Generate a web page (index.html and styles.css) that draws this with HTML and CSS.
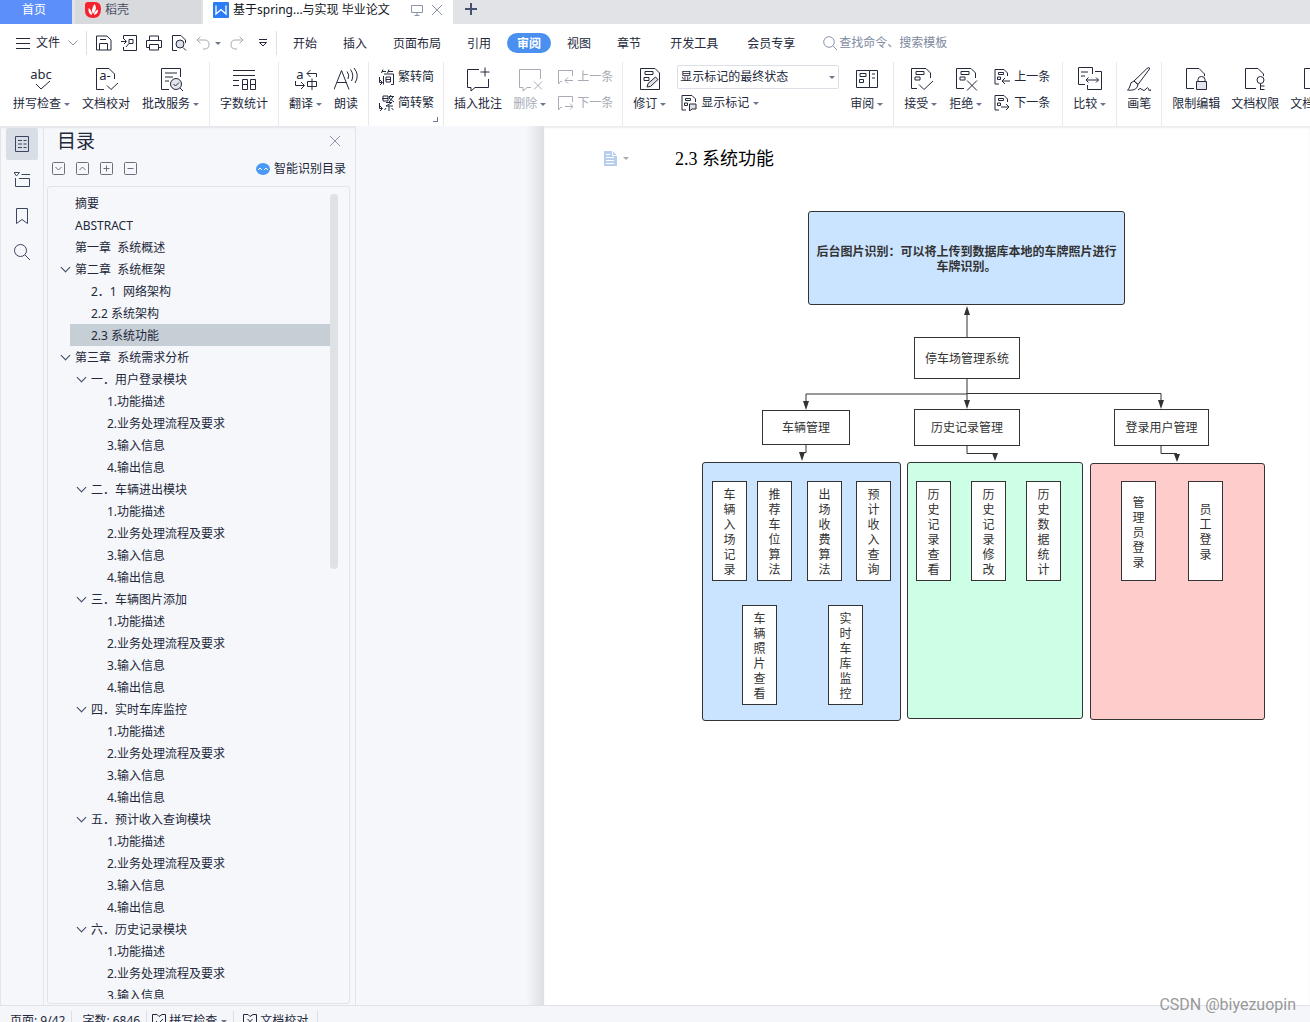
FILE: index.html
```html
<!DOCTYPE html>
<html lang="zh-CN">
<head>
<meta charset="utf-8">
<title>基于spring...与实现 毕业论文</title>
<link rel="stylesheet" href="styles.css">
</head>
<body>
<svg class="sprite" aria-hidden="true">
  <symbol id="i-comment" viewBox="0 0 16 16"><path d="M5 12.500H3.500L1.500 15V1.500H15.500V7"/></symbol>
</svg>

<header class="tabs">
  <button class="tab tab-home">首页</button>
  <button class="tab tab-docer">
    <svg class="logo" viewBox="0 0 16 16"><path d="M3 0h7q6 0 6 7 0 9-8 9Q0 16 0 9V3Q0 0 3 0z" fill="#f5222d"/><path d="M9.500 2Q13 6 8 12Q5.500 8 9.500 2zM3.500 6Q7 8 7 13Q3 12 3.500 6zM13 7.500Q13 12 9 13Q9 9 13 7.500z" fill="#fff"/></svg>
    稻壳</button>
  <div class="tab tab-doc">
    <svg class="logo" viewBox="0 0 16 16"><rect width="16" height="16" rx="1" fill="#2b7cf5"/><path d="M3 3.500V12L8 7.500L13 12V3.500" fill="none" stroke="#fff" stroke-width="1.300"/></svg>
    <span class="tab-title">基于spring...与实现 毕业论文</span>
    <svg class="ico-12 faint" viewBox="0 0 12 12"><path d="M.5 1.500h11v7H.5zM6 8.500v3M3.500 11.500h5"/></svg>
    <button class="icon-btn" aria-label="关闭"><svg class="ico-12 faint" viewBox="0 0 12 12"><path d="M1 1l10 10M11 1L1 11"/></svg></button>
  </div>
  <button class="icon-btn tab-add" aria-label="新建"><svg class="ico-12 thick" viewBox="0 0 12 12"><path d="M6 0v12M0 6h12"/></svg></button>
</header>

<nav class="menubar">
  <button class="file-btn">
    <svg class="ico-14" viewBox="0 0 14 14"><path d="M0 2.500h14M0 7.500h14M0 12.500h14"/></svg>
    文件
    <svg class="chev faint" viewBox="0 0 10 6"><path d="M.5.5L5 5L9.500.5"/></svg>
  </button>
  <div class="quick">
    <button class="icon-btn" aria-label="保存"><svg class="ico-16" viewBox="0 0 16 16"><path d="M.5 1H11L15 5V15H.5zM3.500 15V8.500h8V15M4 4.500h6"/></svg></button>
    <button class="icon-btn" aria-label="输出为PDF"><svg class="ico-16" viewBox="0 0 16 16"><path d="M2.500 4V.5h13v15h-13V12M0 6.500h5M3 4l2.500 2.500L3 9M8 4.500h4v4H8zM8 8.500L5 12"/></svg></button>
    <button class="icon-btn" aria-label="打印"><svg class="ico-16" viewBox="0 0 16 16"><path d="M3.500 5V1h9v4M3 12.500H.5V5.500h15v7H13M3.500 9.500h9V15h-9z"/></svg></button>
    <button class="icon-btn" aria-label="打印预览"><svg class="ico-16" viewBox="0 0 16 16"><path d="M6 15.500H1.500V.5H10L14.500 5V8M12 12.500L15 15.500"/><circle cx="9" cy="9" r="4" fill="#dfe1e6"/></svg></button>
    <button class="icon-btn undo" aria-label="撤销"><svg class="ico-14 gray" viewBox="0 0 14 14"><path d="M4.500.5L1 4L4.500 7.500M1 4H8.500Q13 4 13 8.500T8.500 13H7"/></svg><i class="caret"></i></button>
    <button class="icon-btn" aria-label="恢复"><svg class="ico-14 gray" viewBox="0 0 14 14"><path d="M9.500.5L13 4L9.500 7.500M13 4H5.500Q1 4 1 8.500T5.500 13H7"/></svg></button>
    <button class="icon-btn more" aria-label="更多"><svg class="ico-8" viewBox="0 0 8 8"><path d="M0 .5h8M.5 3.500L4 7L7.500 3.500z"/></svg></button>
  </div>
  <div class="menus">
    <button class="menu">开始</button><button class="menu">插入</button><button class="menu">页面布局</button><button class="menu">引用</button><button class="menu active">审阅</button><button class="menu">视图</button><button class="menu">章节</button>
  </div>
  <div class="menus menus-extra">
    <button class="menu">开发工具</button><button class="menu">会员专享</button>
  </div>
  <label class="search">
    <svg class="ico-14 faint" viewBox="0 0 14 14"><circle cx="6" cy="6" r="5.300"/><path d="M10 10l4 4"/></svg>
    <input type="text" placeholder="查找命令、搜索模板" aria-label="查找命令、搜索模板">
  </label>
</nav>

<section class="ribbon">
  <div class="group group-first">
    <button class="big"><svg class="ico-26" viewBox="0 0 26 26"><text x="12" y="13" class="icon-text">abc</text><path d="M7 18l5 5L21 15"/></svg><span>拼写检查<i class="caret"></i></span></button>
    <button class="big"><svg class="ico-26" viewBox="0 0 26 26"><text x="12" y="14" class="icon-text">a-</text><path d="M11 23.500H3.500V2.500H16L21.500 8V13M14 19.500l4 4L25 17"/></svg><span>文档校对</span></button>
    <button class="big"><svg class="ico-26" viewBox="0 0 26 26"><path d="M11 23.500H3.500V2.500H22.500V11M7 7h12M7 11h8M7 15h4M21.500 21.500L25 25"/><circle cx="18" cy="18" r="5.500" fill="#e3e5ea"/><path d="M15.500 18l2 2 3.500-3.500"/></svg><span>批改服务<i class="caret"></i></span></button>
  </div>
  <div class="group">
    <button class="big"><svg class="ico-26" viewBox="0 0 26 26"><path d="M2 4.500H24M2 9.500H24M2 14.500h6M2 19.500h6M11.500 13.500h5v10h-5zM11.500 18.500h5M19.500 13.500h5v10h-5zM19.500 18.500h5"/></svg><span>字数统计</span></button>
  </div>
  <div class="group group-wide">
    <button class="big"><svg class="ico-26" viewBox="0 0 26 26"><text x="7" y="13" class="icon-text">a</text><path d="M23.500 11V7.500H14M17.500 4L14 7.500L17.500 11M2.500 15V19.500H11M8 16l3.500 3.500L8 23M14.500 15.500h9v5h-9zM19 12.500v11.500"/></svg><span>翻译<i class="caret"></i></span></button>
    <button class="big"><svg class="ico-24" viewBox="1 1 24 24"><path d="M1 23.500L8.500 4.500L16 23.500M4 16.500h9.500M14 5.500Q17 9 15 13M17.500 3.500Q21.500 9 18.500 15M21 2Q27 9 22 17"/></svg><span>朗读</span></button>
  </div>
  <div class="group group-narrow">
    <div class="stack">
      <button class="small"><svg class="ico-16" viewBox="0 0 16 16"><path d="M5 .5L3.500 4M4 2.500h4M11 .5L9.500 4M10 2.500h5M5.500 7v8.500M6 5h9.500V15.500H13M8 8h4.500v5H8zM8 10.500h4.500M1.500 8v5.500H4M2 11l2.500 2.500L2 16"/></svg>繁转简</button>
      <button class="small"><svg class="ico-16" viewBox="0 0 16 16"><path d="M5 1h5M4 3.500h6M5 1v5h5V1M11 1.500h5M13 0l-2 3M15 2l-4 5M11 3l5 4M8 7.500h6L8 11h7M11 11v5M8 13l-1.500 2M13.500 13l2 2M1.500 8v5.500H4M2 11l2.500 2.500L2 16"/></svg>简转繁</button>
    </div>
    <i class="launcher"></i>
  </div>
  <div class="group group-narrow-end">
    <button class="big"><svg class="ico-26" viewBox="0 0 26 26"><path d="M14 3.500H2.500V21.500H6V25L10 21.500H23.500V13M20 1.500v9M15.500 6h9"/></svg><span>插入批注</span></button>
    <button class="big disabled"><svg class="ico-26" viewBox="0 0 26 26"><path d="M14 21.500H10L6 25V21.500H2.500V3.500H23.500V13M17 15.500l8 8M25 15.500l-8 8"/></svg><span>删除<i class="caret"></i></span></button>
    <div class="stack">
      <button class="small disabled"><svg class="ico-16" viewBox="0 0 16 16"><use href="#i-comment"/><path d="M8 11.500h8M11 8.500L8 11.500l3 3"/></svg>上一条</button>
      <button class="small disabled"><svg class="ico-16" viewBox="0 0 16 16"><use href="#i-comment"/><path d="M8 11.500h8M13 8.500l3 3-3 3"/></svg>下一条</button>
    </div>
  </div>
  <div class="group">
    <button class="big"><svg class="ico-26" viewBox="0 0 26 26"><path d="M3.500 2.500H18L22.500 7V23.500H3.500zM8 5.500h8v3H8zM7 11.500h5v3H7z"/><path d="M10 21l1-3.500L18.500 11L21 13.500L13.500 20.500z" fill="#dfe1e6"/></svg><span>修订<i class="caret"></i></span></button>
    <div class="stack">
      <span class="select-wrap"><select aria-label="显示状态"><option>显示标记的最终状态</option></select><i class="caret"></i></span>
      <button class="small show-marks"><svg class="ico-16" viewBox="0 0 16 16"><path d="M5 15H1V.5H11L14.500 4V7M4.500 3.500h5v2h-5zM3.500 8h3v2.500h-3z"/><path d="M8.500 9h6.500v5h-4l-2.500 2z" fill="#dfe1e6"/></svg>显示标记<i class="caret"></i></button>
    </div>
    <button class="big"><svg class="ico-26" viewBox="0 0 26 26"><path d="M2.500 4.500H15.500V21.500H2.500zM15.500 4.500H23.500V21.500H15.500M6 7.500h6v3H6zM5.500 13.500h4v3h-4zM18 8h3M18 12h3"/></svg><span>审阅<i class="caret"></i></span></button>
  </div>
  <div class="group group-wide group-changes">
    <button class="big"><svg class="ico-26" viewBox="0 0 26 26"><path d="M9 22.500H3.500V2.500H18L22.500 7V12M8 5.500h8v3H8zM7 11h5v3H7zM11 18.500l5 5L25 15"/></svg><span>接受<i class="caret"></i></span></button>
    <button class="big"><svg class="ico-26" viewBox="0 0 26 26"><path d="M11 22.500H3.500V2.500H18L22.500 7V12M8 5.500h8v3H8zM7 11h5v3H7zM14 14.500l10 10M24 14.500l-10 10"/></svg><span>拒绝<i class="caret"></i></span></button>
    <div class="stack">
      <button class="small"><svg class="ico-16" viewBox="0 0 16 16"><path d="M5 15H1V.5H10L13.500 4V7M4.500 3.500h5v2h-5zM3.500 8h3v2.500h-3zM8 12h8M11 9l-3 3 3 3"/></svg>上一条</button>
      <button class="small"><svg class="ico-16" viewBox="0 0 16 16"><path d="M5 15H1V.5H10L13.500 4V7M4.500 3.500h5v2h-5zM3.500 8h3v2.500h-3zM7 12h8M12 9l3 3-3 3"/></svg>下一条</button>
    </div>
  </div>
  <div class="group">
    <button class="big"><svg class="ico-26" viewBox="0 0 26 26"><path d="M8 18.500H1.500V1.500H15.500V8M4 6h7M4 10h4M18 5.500H24.500V23.500H10.500V19M9 14h12.500M11.500 11.500L9 14l2.500 2.500M19 11.500l2.500 2.500-2.500 2.500"/></svg><span>比较<i class="caret"></i></span></button>
  </div>
  <div class="group">
    <button class="big"><svg class="ico-24" viewBox="1 1 24 24"><path d="M8 15L21 2.500Q24 .5 23.500 3L12 18.500zM8 15l4 3.500M8 15Q4 16 4 20Q3 23.500 1.500 24Q8 25 11 21.500L12 18.500M12 24q2-3 4-.5t4-.5 3 1 2-1"/></svg><span>画笔</span></button>
  </div>
  <div class="group group-last">
    <button class="big"><svg class="ico-26" viewBox="0 0 26 26"><path d="M11 22.500H3.500V2.500H16L21.500 8V10M15 16V13.500q0-3 3.500-3t3.500 3V16"/><path d="M13.500 15.500h10v8h-10z" fill="#e3e5ea"/></svg><span>限制编辑</span></button>
    <button class="big"><svg class="ico-26" viewBox="0 0 26 26"><path d="M14 22.500H3.500V2.500H16L21.500 8V10M18.500 17.500V24M18.500 20h4M18.500 23.500h4"/><circle cx="18.500" cy="14" r="3.500"/></svg><span>文档权限</span></button>
    <button class="big"><svg class="ico-26" viewBox="0 0 26 26"><path d="M14 22.500H3.500V2.500H16L21.500 8V10M13 18l4 4 7-7"/></svg><span>文档认证</span></button>
  </div>
</section>

<main class="workspace">
  <nav class="rail">
    <button class="rail-btn active" aria-label="目录"><svg class="ico-16" viewBox="0 0 16 16"><path d="M1.500.5h13v15h-13zM4 4.500h4M4 8h4M4 11.500h4M9.500 4.500h3M9.500 8h3M9.500 11.500h3"/></svg></button>
    <button class="rail-btn" aria-label="章节"><svg class="ico-16" viewBox="0 0 16 16"><path d="M0 .5h5.500L2.500 4zM7.500 2.500h8.500M1.500 6V14.500h14V6.500H5"/></svg></button>
    <button class="rail-btn" aria-label="书签"><svg class="ico-16" viewBox="0 0 16 16"><path d="M2.500.5h11v15L8 11.500L2.500 15.500z"/></svg></button>
    <button class="rail-btn" aria-label="查找"><svg class="ico-16" viewBox="0 0 16 16"><circle cx="6.500" cy="6.500" r="6"/><path d="M11 11l5 5"/></svg></button>
  </nav>

  <aside class="outline">
    <div class="outline-head">
      <h2>目录</h2>
      <button class="icon-btn" aria-label="关闭目录"><svg class="ico-10 faint" viewBox="0 0 10 10"><path d="M0 0l10 10M10 0L0 10"/></svg></button>
    </div>
    <div class="outline-tools">
      <button class="icon-btn" aria-label="展开"><svg class="ico-13" viewBox="0 0 13 13"><rect x=".5" y=".5" width="12" height="12" rx="1"/><path d="M3.500 5L6.500 8L9.500 5"/></svg></button>
      <button class="icon-btn" aria-label="收起"><svg class="ico-13" viewBox="0 0 13 13"><rect x=".5" y=".5" width="12" height="12" rx="1"/><path d="M3.500 8L6.500 5L9.500 8"/></svg></button>
      <button class="icon-btn" aria-label="增加级别"><svg class="ico-13" viewBox="0 0 13 13"><rect x=".5" y=".5" width="12" height="12" rx="1"/><path d="M3.500 6.500h6M6.500 3.500v6"/></svg></button>
      <button class="icon-btn" aria-label="减少级别"><svg class="ico-13" viewBox="0 0 13 13"><rect x=".5" y=".5" width="12" height="12" rx="1"/><path d="M3.500 6.500h6"/></svg></button>
      <button class="smart"><svg class="bot" viewBox="0 0 14 12"><ellipse cx="7" cy="6" rx="7" ry="6" fill="#4a9af5"/><path d="M2 7l2-2 2 2M8 7l2-2 2 2" fill="none" stroke="#fff"/></svg>智能识别目录</button>
    </div>
    <div class="outline-box">
      <ul class="tree">
        <li><a href="#">摘要</a></li>
        <li><a href="#">ABSTRACT</a></li>
        <li><a href="#">第一章  系统概述</a></li>
        <li class="open"><a href="#">第二章  系统框架</a></li>
        <li class="l2"><a href="#">2．1  网络架构</a></li>
        <li class="l2"><a href="#">2.2 系统架构</a></li>
        <li class="l2 selected"><a href="#">2.3 系统功能</a></li>
        <li class="open"><a href="#">第三章  系统需求分析</a></li>
        <li class="l2 open"><a href="#">一．用户登录模块</a></li>
        <li class="l3"><a href="#">1.功能描述</a></li>
        <li class="l3"><a href="#">2.业务处理流程及要求</a></li>
        <li class="l3"><a href="#">3.输入信息</a></li>
        <li class="l3"><a href="#">4.输出信息</a></li>
        <li class="l2 open"><a href="#">二．车辆进出模块</a></li>
        <li class="l3"><a href="#">1.功能描述</a></li>
        <li class="l3"><a href="#">2.业务处理流程及要求</a></li>
        <li class="l3"><a href="#">3.输入信息</a></li>
        <li class="l3"><a href="#">4.输出信息</a></li>
        <li class="l2 open"><a href="#">三．车辆图片添加</a></li>
        <li class="l3"><a href="#">1.功能描述</a></li>
        <li class="l3"><a href="#">2.业务处理流程及要求</a></li>
        <li class="l3"><a href="#">3.输入信息</a></li>
        <li class="l3"><a href="#">4.输出信息</a></li>
        <li class="l2 open"><a href="#">四．实时车库监控</a></li>
        <li class="l3"><a href="#">1.功能描述</a></li>
        <li class="l3"><a href="#">2.业务处理流程及要求</a></li>
        <li class="l3"><a href="#">3.输入信息</a></li>
        <li class="l3"><a href="#">4.输出信息</a></li>
        <li class="l2 open"><a href="#">五．预计收入查询模块</a></li>
        <li class="l3"><a href="#">1.功能描述</a></li>
        <li class="l3"><a href="#">2.业务处理流程及要求</a></li>
        <li class="l3"><a href="#">3.输入信息</a></li>
        <li class="l3"><a href="#">4.输出信息</a></li>
        <li class="l2 open"><a href="#">六．历史记录模块</a></li>
        <li class="l3"><a href="#">1.功能描述</a></li>
        <li class="l3"><a href="#">2.业务处理流程及要求</a></li>
        <li class="l3"><a href="#">3.输入信息</a></li>
      </ul>
      <div class="scroll-track"><div class="scroll-thumb"></div></div>
    </div>
  </aside>

  <div class="gutter"></div>

  <article class="page">
    <div class="page-line">
      <button class="icon-btn para" aria-label="段落布局"><svg class="para-ico" viewBox="0 0 13 15"><path d="M0 0H8.500L13 4.500V15H0z" fill="#b9cdec"/><path d="M8.500 0V4.500H13M2 3.500h4M2 6.500h8M2 9.500h8M2 12.500h8" fill="none" stroke="#fff"/></svg><i class="caret"></i></button>
      <h1>2.3 系统功能</h1>
    </div>
    <div class="diagram">
      <div class="box panel blue"></div>
      <div class="box panel green"></div>
      <div class="box panel red"></div>
      <svg class="wires" viewBox="0 0 568 514">
        <path d="M267 127V104M267 168V190M267 184H106V192M267 183.500H461V192M106 235V242.500H102M267 236V243.500H295M461 236V243.500H477"/>
        <path class="head" d="M267 96l-3 9h6zM267 199l-3-9h6zM106 200l-3-9h6zM461 199l-3-9h6zM102 251l-3-9h6zM295 251l-3-8h6zM477 252l-3-8h6z"/>
      </svg>
      <div class="box notice">后台图片识别：可以将上传到数据库本地的车牌照片进行<br>车牌识别。</div>
      <div class="box n-root">停车场管理系统</div>
      <div class="box n-car">车辆管理</div>
      <div class="box n-history">历史记录管理</div>
      <div class="box n-login">登录用户管理</div>
      <div class="box tall t-entry"><span>车辆入场记录</span></div>
      <div class="box tall t-recommend"><span>推荐车位算法</span></div>
      <div class="box tall t-charge"><span>出场收费算法</span></div>
      <div class="box tall t-income"><span>预计收入查询</span></div>
      <div class="box tall t-photo"><span>车辆照片查看</span></div>
      <div class="box tall t-monitor"><span>实时车库监控</span></div>
      <div class="box tall t-view"><span>历史记录查看</span></div>
      <div class="box tall t-edit"><span>历史记录修改</span></div>
      <div class="box tall t-stats"><span>历史数据统计</span></div>
      <div class="box tall t-admin"><span>管理员登录</span></div>
      <div class="box tall t-staff"><span>员工登录</span></div>
    </div>
  </article>
</main>

<footer class="status">
  <span class="status-item">页面: 9/42</span>
  <span class="status-item">字数: 6846</span>
  <button class="status-item status-check"><svg class="ico-16" viewBox="0 0 16 16"><path d="M6 1.500H1.500V14.500h13V1.500H11M6 1.500l2 2 3-2M5 8l2.500 2.500L12 6"/></svg>拼写检查<i class="caret"></i></button>
  <button class="status-item"><svg class="ico-16" viewBox="0 0 16 16"><path d="M6 1.500H1.500V14.500h13V1.500H11M6 1.500l2 2 3-2M5.500 6l5 5M10.500 6l-5 5"/></svg>文档校对</button>
</footer>
<div class="watermark">CSDN @biyezuopin</div>
</body>
</html>
```
FILE: styles.css
```css
*, *::before { box-sizing: border-box; }

body {
  margin: 0;
  height: 100vh;
  display: flex;
  flex-direction: column;
  overflow: hidden;
  position: relative;
  background: #f5f7fa;
  color: #23283a;
  font: 12px/20px "Noto Sans", "Noto Sans CJK SC", sans-serif;
}

button, input, select { font: inherit; color: inherit; }
button { border: 0; padding: 0; background: none; white-space: nowrap; }
a { color: inherit; text-decoration: none; }
i { font-style: normal; }
svg { flex: none; fill: none; stroke: currentColor; stroke-width: 1; }
.logo, .bot, .para-ico { stroke: none; }
.sprite { position: absolute; width: 0; height: 0; }

.ico-8 { width: 8px; height: 8px; }
.ico-10 { width: 10px; height: 10px; }
.ico-12 { width: 12px; height: 12px; }
.ico-13 { width: 13px; height: 13px; color: #6b7080; }
.ico-14 { width: 14px; height: 14px; }
.ico-16 { width: 16px; height: 16px; }
.ico-24 { width: 24px; height: 24px; margin: 1px 0; }
.ico-26 { width: 26px; height: 26px; overflow: visible; }
.chev { width: 10px; height: 6px; }
.faint { color: #8a94aa; }
.gray { color: #a3a8b2; }
.thick { stroke-width: 2; color: #45506b; }
.icon-text { font: 13px/14px "Noto Sans", sans-serif; fill: currentColor; stroke: none; text-anchor: middle; }

.icon-btn { display: flex; align-items: center; }
.caret {
  display: inline-block;
  flex: none;
  margin-left: 3px;
  vertical-align: middle;
  border: solid transparent;
  border-width: 3px 3px 0;
  border-top-color: #6b7690;
}

/* Window tabs */
.tabs { flex: none; display: flex; height: 24px; background: #e2e3e7; }
.tab { display: flex; align-items: center; height: 24px; padding-bottom: 4px; }
.tab-home { width: 72px; justify-content: center; padding-right: 4px; background: #5c8ffa; color: #fff; margin-right: 3px; }
.tab-docer { width: 126px; padding-left: 10px; gap: 4px; background: #d9dade; color: #4a5060; margin-right: 2px; }
.tab-doc { width: 250px; padding-left: 10px; background: #fff; color: #101522; }
.tab-title { width: 182px; padding-left: 4px; white-space: nowrap; }
.tab-doc .icon-btn { margin-left: 8px; }
.tab-add { margin-left: 12px; height: 18px; }
.logo { width: 16px; height: 16px; }

/* Menu bar */
.menubar { flex: none; display: flex; align-items: center; height: 38px; background: #fff; }
.file-btn { display: flex; align-items: center; gap: 6px; height: 24px; padding: 0 8px 0 16px; border-right: 1px solid #dcdfe5; }
.file-btn .chev { margin-left: 2px; }
.quick { display: flex; align-items: center; gap: 9px; height: 24px; padding: 0 9px 0 9px; border-right: 1px solid #dcdfe5; }
.undo { gap: 2px; }
.more { padding-left: 6px; }
.menus { display: flex; gap: 6px; padding-left: 6px; }
.menu { height: 20px; padding: 2px 10px 0; line-height: 18px; border-radius: 10px; }
.menu.active { background: #4a90f0; color: #fff; font-weight: 700; }
.menus-extra { gap: 9px; padding-left: 9px; }
.search { display: flex; align-items: center; gap: 2px; margin-left: 18px; }
.search input { width: 130px; border: 0; padding: 0; outline: 0; background: none; }
.search input::placeholder { color: #8089a0; opacity: 1; }

/* Ribbon */
.ribbon { flex: none; display: flex; height: 64px; overflow: hidden; background: #fff; }
.group { position: relative; flex: none; display: flex; gap: 11px; padding: 0 10px; border-right: 1px solid #e8eaee; }
.group-first { gap: 12px; padding-left: 13px; }
.group-wide { gap: 12px; }
.group-narrow { padding: 0 9px; }
.group-narrow-end { padding-right: 9px; }
.group-changes { padding-right: 12px; }
.group-last { border-right: 0; }
.big { display: flex; flex-direction: column; align-items: center; padding-top: 4px; height: 52px; }
.big span { display: flex; align-items: center; margin-top: 2px; }
.stack { display: flex; flex-direction: column; height: 54px; padding-top: 2px; }
.small { display: flex; align-items: center; gap: 4px; height: 26px; }
.small .caret { margin-left: 0; }
.disabled { color: #a6abb5; }
.show-marks { padding-left: 4px; }
.select-wrap { position: relative; display: flex; align-items: center; height: 26px; }
.select-wrap select { width: 162px; height: 24px; padding: 0 20px 0 2px; appearance: none; border: 1px solid #dcdfe5; border-radius: 2px; background: #fff; }
.select-wrap .caret { position: absolute; right: 4px; }
.launcher { position: absolute; right: 5px; bottom: 4px; width: 5px; height: 5px; border: solid #6b7690; border-width: 0 1px 1px 0; }

/* Workspace */
.workspace { flex: 1; min-height: 0; display: flex; box-shadow: inset 0 2px 2px #e4e6ea; }
.rail { flex: none; width: 44px; display: flex; flex-direction: column; gap: 4px; padding: 2px 5px; border: solid #e2e5ea; border-width: 0 1px; color: #3c4661; }
.rail-btn { display: flex; align-items: center; justify-content: center; width: 32px; height: 32px; border-radius: 2px; }
.rail-btn.active { background: #d9dee6; }

.outline { flex: none; width: 312px; display: flex; flex-direction: column; padding: 0 5px 1px 3px; border-right: 1px solid #e2e5ea; }
.outline-head { display: flex; align-items: center; justify-content: space-between; height: 30px; padding: 0 10px; }
.outline-head h2 { margin: 0; font-size: 19px; font-weight: 400; }
.outline-tools { display: flex; align-items: center; gap: 11px; height: 24px; padding: 0 4px 0 5px; }
.smart { display: flex; align-items: center; gap: 4px; margin-left: auto; padding-top: 1px; }
.bot { width: 14px; height: 12px; }
.outline-box { flex: 1; min-height: 0; display: flex; margin-top: 6px; padding: 5px 11px 4px 22px; border: 1px solid #e0e3e9; border-radius: 3px; }
.tree { flex: 1; margin: 0 0 0 -14px; padding: 0 0 0 14px; list-style: none; overflow: hidden; }
.tree li { display: flex; align-items: center; height: 22px; padding: 1px 0 0 5px; }
.tree a { line-height: 22px; white-space: pre; }
.tree .l2 { padding-left: 21px; }
.tree .l3 { padding-left: 37px; }
.tree .selected { background: #c6ced6; }
.tree .open::before {
  content: "";
  flex: none;
  width: 7px;
  height: 7px;
  margin: 0 6px 4px -13px;
  border: solid #3c4661;
  border-width: 0 1px 1px 0;
  transform: rotate(45deg);
}
.scroll-track { flex: none; width: 8px; padding-top: 2px; }
.scroll-thumb { height: 375px; border-radius: 4px; background: #dfe2e5; }

.gutter { flex: none; width: 188px; background: linear-gradient(to left, #dddfe2, #f5f7fa 18px); }

/* Document page */
.page { flex: 1; min-width: 0; padding: 20px 0 0 60px; background: #fff; overflow: hidden; box-shadow: inset 0 2px 2px #ececef; }
.page-line { display: flex; align-items: center; height: 24px; }
.para { width: 71px; gap: 3px; }
.para .caret { border-top-color: #aaa; }
.para-ico { width: 13px; height: 15px; }
.page h1 { margin: 0; padding-top: 2px; font: 18px/24px "Liberation Serif", "Noto Sans CJK SC", serif; color: #000; }

.diagram { position: relative; width: 568px; height: 514px; margin: 40px 0 0 96px; color: #333; }
.wires { position: absolute; inset: 0; width: 568px; height: 514px; stroke: #333; }
.wires .head { fill: #333; stroke: none; }
.box { position: absolute; display: flex; align-items: center; justify-content: center; border: 1px solid #333; background: #fff; line-height: 15px; text-align: center; white-space: nowrap; }
.panel, .notice { border-radius: 3px; }
.notice { left: 108px; top: 1px; width: 317px; height: 94px; padding-top: 2px; background: #cae4ff; font-weight: 700; }
.blue { left: 2px; top: 252px; width: 199px; height: 259px; background: #cae4ff; }
.green { left: 207px; top: 252px; width: 176px; height: 257px; background: #ccffe6; }
.red { left: 390px; top: 253px; width: 175px; height: 257px; background: #ffcccc; }
.n-root { left: 214px; top: 127px; width: 106px; height: 42px; }
.n-car { left: 62px; top: 200px; width: 88px; height: 35px; }
.n-history { left: 214px; top: 199px; width: 106px; height: 37px; }
.n-login { left: 414px; top: 199px; width: 95px; height: 37px; }
.tall { top: 271px; width: 35px; height: 100px; padding-top: 2px; }
.tall span { width: 12px; white-space: normal; word-break: break-all; }
.t-entry { left: 12px; }
.t-recommend { left: 57px; }
.t-charge { left: 107px; }
.t-income { left: 156px; }
.t-photo { left: 42px; top: 395px; }
.t-monitor { left: 128px; top: 395px; }
.t-view { left: 216px; }
.t-edit { left: 271px; }
.t-stats { left: 326px; }
.t-admin { left: 421px; }
.t-staff { left: 488px; }

/* Status bar */
.status { flex: none; display: flex; height: 17px; padding-top: 5px; overflow: hidden; border-top: 1px solid #dfe2e7; background: #f5f6f9; }
.status-item { flex: none; display: flex; align-items: center; gap: 2px; height: 20px; padding: 0 6px 0 10px; border-right: 1px solid #dcdfe5; }
.status-item:last-child { padding-right: 9px; padding-left: 8px; }
.status-check { padding-left: 4px; }
.status-check .caret { margin-left: 2px; }

.watermark { position: absolute; right: 14px; bottom: 7px; font: 16px/20px Roboto, sans-serif; color: #999; }
```
